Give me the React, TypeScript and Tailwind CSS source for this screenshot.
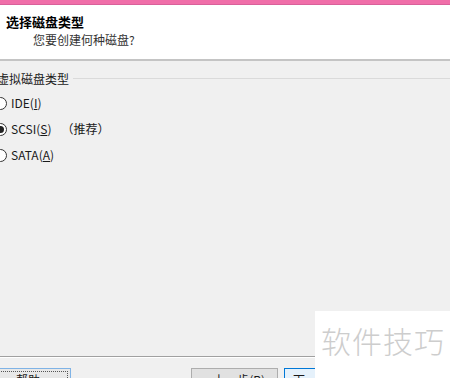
import React from "react";

const cjk = '"Noto Sans CJK SC", "DejaVu Sans", sans-serif';

function Radio({ checked, label, extra }: { checked?: boolean; label: React.ReactNode; extra?: string }) {
  return (
    <div className="flex h-[26px] items-center">
      <span className="ml-[-6px] flex h-[13px] w-[13px] shrink-0 items-center justify-center rounded-full border border-[#333] bg-white">
        {checked && <span className="h-[7px] w-[7px] rounded-full bg-[#222]" />}
      </span>
      <span className="ml-[4px] text-[12px] leading-none text-[#1a1a1a]">{label}</span>
      {extra && <span className="ml-[10px] text-[12px] leading-none text-[#1a1a1a]">{extra}</span>}
    </div>
  );
}

export default function App() {
  return (
    <div
      className="relative flex h-[378px] w-[450px] flex-col overflow-hidden bg-[#f0f0f0]"
      style={{ fontFamily: cjk }}
    >
      {/* pink window frame */}
      <div className="h-[5px] shrink-0 border-b border-[#d9609a] bg-[#f06ea9]" />

      {/* header */}
      <div className="h-[56px] shrink-0 border-b-2 border-[#c4c4c4] bg-white pl-[6px] pt-[8px]">
        <div className="text-[13px] font-bold leading-[17px] text-black">选择磁盘类型</div>
        <div className="mt-[2px] pl-[27px] text-[12px] leading-[16px] text-[#333]">您要创建何种磁盘?</div>
      </div>

      {/* group box */}
      <div className="mt-[10px] flex items-center">
        <span className="ml-[-3px] text-[12px] leading-[16px] text-[#1a1a1a]">虚拟磁盘类型</span>
        <span className="ml-[4px] mb-[2px] h-px flex-1 bg-[#dadada]" />
      </div>
      <div className="mt-[3px] flex flex-col">
        <Radio label={<>IDE(<u>I</u>)</>} />
        <Radio checked label={<>SCSI(<u>S</u>)</>} extra="（推荐）" />
        <Radio label={<>SATA(<u>A</u>)</>} />
      </div>

      <div className="flex-1" />

      {/* bottom separator */}
      <div className="h-px shrink-0 bg-[#a0a0a0]" />
      <div className="h-px shrink-0 bg-white" />

      {/* buttons, partly below the window edge */}
      <div className="mb-[-13px] mt-[10px] flex h-[23px] shrink-0 items-start">
        <div className="ml-[-15px] flex h-[23px] w-[86px] items-center justify-center border border-[#7fb3e6] bg-[#e8e8e8] p-[2px]">
          <div className="flex h-full w-full items-center justify-center border border-dotted border-[#555] text-[12px] text-[#1a1a1a]">
            帮助
          </div>
        </div>
        <div className="ml-[120px] flex h-[23px] w-[87px] items-center justify-center border border-[#adadad] bg-[#e1e1e1] text-[12px] text-[#1a1a1a]">
          &lt; 上一步(B)
        </div>
        <div className="ml-[6px] flex h-[23px] w-[87px] items-center border border-[#0078d7] bg-[#e5f1fb] pl-[8px] text-[12px] text-[#1a1a1a]">
          下一步(N) &gt;
        </div>
      </div>

      {/* watermark */}
      <div className="absolute left-[315px] top-[311px] flex h-[67px] w-[135px] items-start bg-white pl-[6px] pt-[9px]">
        <span className="text-[30px] font-light leading-[40px] tracking-[1px] text-[#cdcdcd]">软件技巧</span>
      </div>
    </div>
  );
}
